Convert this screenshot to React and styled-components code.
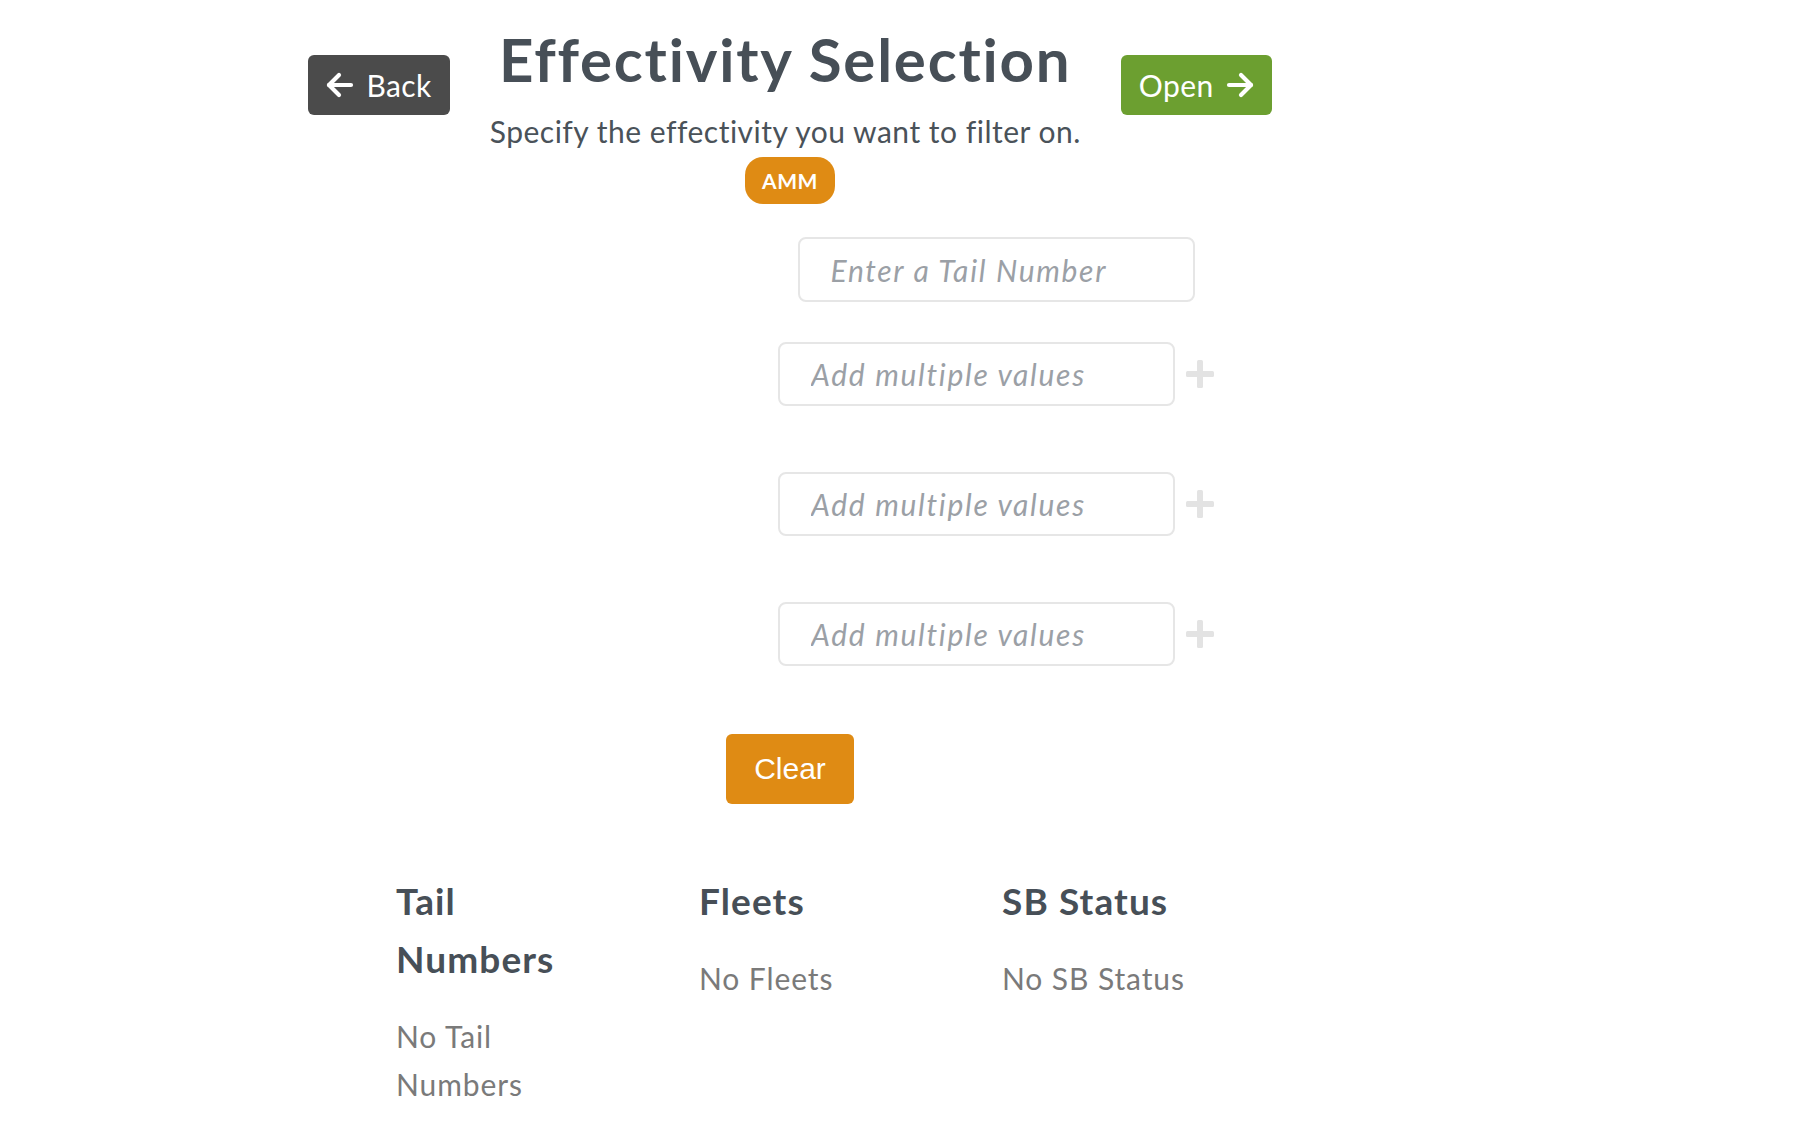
import React from 'react'
import styled, {createGlobalStyle} from 'styled-components'

const FONT = `"Lato", "Open Sans", "Noto Sans", sans-serif`

const GlobalStyle = createGlobalStyle`
    body {
        margin: 0;
        background: #ffffff;
        font-family: ${FONT};
    }
`

//전체 Wrapper
const StyledPage = styled.div`
    width: 1580px;
    padding-top: 26px;
    padding-bottom: 40px;
    display: flex;
    flex-direction: column;
    align-items: center;
`

//Back / 제목 / Open 한 줄
const StyledHeader = styled.div`
    display: flex;
    align-items: flex-start;
    gap: 40px;
`

const StyledTitleBlock = styled.div`
    display: flex;
    flex-direction: column;
    align-items: center;
`

const StyledTitle = styled.h1`
    margin: 0;
    font-size: 60px;
    line-height: 66px;
    font-weight: 700;
    letter-spacing: 1.8px;
    color: #474f57;
`

const StyledSubtitle = styled.p`
    margin: 17px 0 0;
    font-size: 30px;
    line-height: 45px;
    letter-spacing: 0.5px;
    color: #4a5259;
`

//Back, Open 버튼
const StyledNavButton = styled.button`
    margin-top: 29px;
    height: 60px;
    padding: 0 18px;
    display: inline-flex;
    align-items: center;
    gap: 12px;
    border: none;
    border-radius: 6px;
    background-color: ${(props) => props.color};
    color: #ffffff;
    font-family: ${FONT};
    font-size: 30px;
    letter-spacing: 0.4px;
`

const StyledBadge = styled.span`
    margin-top: 3px;
    height: 47px;
    padding: 0 17px;
    display: inline-flex;
    align-items: center;
    border-radius: 18px;
    background-color: #df8b14;
    color: #ffffff;
    font-size: 21px;
    font-weight: 700;
    letter-spacing: 0.6px;
`

//입력 영역 (오른쪽으로 치우쳐 있음)
const StyledForm = styled.div`
    align-self: stretch;
    padding-left: 412px;
    display: flex;
    flex-direction: column;
    align-items: center;
`

const StyledInput = styled.input`
    box-sizing: border-box;
    width: 397px;
    height: ${(props) => props.h}px;
    margin-top: ${(props) => props.top}px;
    padding: 0 20px 0 31px;
    border: 2px solid #e6e6e6;
    border-radius: 8px;
    font-family: ${FONT};
    font-size: 30px;
    letter-spacing: 1.7px;
    color: #474f57;
    outline: none;

    &::placeholder {
        color: #9ba0a6;
        font-style: italic;
    }
`

const StyledMultiRow = styled.div`
    display: flex;
    align-items: center;
    gap: 11px;
    margin-top: ${(props) => props.top}px;

    ${StyledInput} {
        margin-top: 0;
    }
`

const StyledClear = styled.button`
    margin-top: 68px;
    height: 70px;
    padding: 0 28px;
    border: none;
    border-radius: 6px;
    background-color: #df8b14;
    color: #ffffff;
    font-family: "Liberation Sans", Arial, sans-serif;
    font-size: 30px;
`

//아래 세 칸
const StyledSummary = styled.div`
    align-self: flex-start;
    margin: 68px 0 0 396px;
    display: grid;
    grid-template-columns: repeat(3, 205px);
    column-gap: 98px;
`

const StyledColumn = styled.div`
    display: flex;
    flex-direction: column;
`

const StyledColTitle = styled.h3`
    margin: 0;
    font-size: 37px;
    line-height: 58px;
    font-weight: 700;
    letter-spacing: 1.1px;
    color: #474f57;
`

const StyledColText = styled.p`
    margin: 24px 0 0;
    font-size: 30px;
    line-height: 48px;
    letter-spacing: 0.9px;
    color: #7a7a7a;
`

const Arrow = ({dir}) => (
    <svg width="28" height="26" viewBox="0 0 28 26" fill="none" stroke="#ffffff"
        strokeWidth="4.2" strokeLinecap="round" strokeLinejoin="round"
        style={{transform: dir === 'right' ? 'scaleX(-1)' : 'none'}}>
        <path d="M13 3 L3 13 L13 23" />
        <path d="M3 13 H25" />
    </svg>
)

const Plus = () => (
    <svg width="28" height="28" viewBox="0 0 28 28" fill="#e3e3e3">
        <rect x="0" y="11" width="28" height="6" rx="1.5" />
        <rect x="11" y="0" width="6" height="28" rx="1.5" />
    </svg>
)

const columns = [
    {title: 'Tail Numbers', empty: 'No Tail Numbers'},
    {title: 'Fleets', empty: 'No Fleets'},
    {title: 'SB Status', empty: 'No SB Status'},
]

const App = () => {
    return (
        <>
            <GlobalStyle />
            <StyledPage>
                <StyledHeader>
                    <StyledNavButton color='#4b4b4b'>
                        <Arrow dir='left' />
                        Back
                    </StyledNavButton>
                    <StyledTitleBlock>
                        <StyledTitle>Effectivity Selection</StyledTitle>
                        <StyledSubtitle>Specify the effectivity you want to filter on.</StyledSubtitle>
                    </StyledTitleBlock>
                    <StyledNavButton color='#6c9f30'>
                        Open
                        <Arrow dir='right' />
                    </StyledNavButton>
                </StyledHeader>

                <StyledBadge>AMM</StyledBadge>

                <StyledForm>
                    <StyledInput type='text' h={65} top={33} placeholder='Enter a Tail Number' />
                    {[40, 66, 66].map((top, i) => (
                        <StyledMultiRow key={i} top={top}>
                            <StyledInput type='text' h={64} placeholder='Add multiple values' />
                            <Plus />
                        </StyledMultiRow>
                    ))}
                </StyledForm>

                <StyledClear>Clear</StyledClear>

                <StyledSummary>
                    {columns.map((col) => (
                        <StyledColumn key={col.title}>
                            <StyledColTitle>{col.title}</StyledColTitle>
                            <StyledColText>{col.empty}</StyledColText>
                        </StyledColumn>
                    ))}
                </StyledSummary>
            </StyledPage>
        </>
    )
}

export default App
